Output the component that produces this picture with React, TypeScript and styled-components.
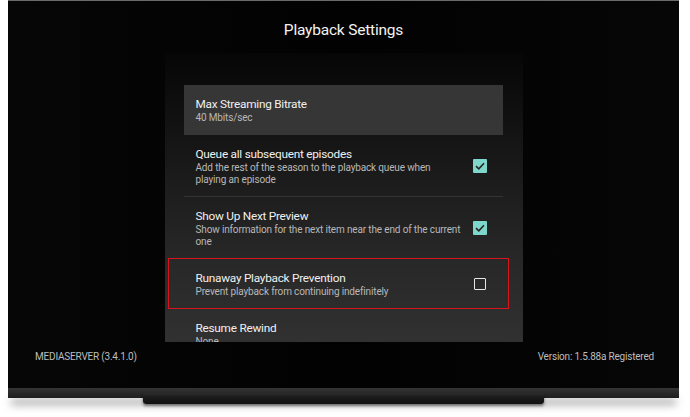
import React from "react";
import styled, { createGlobalStyle } from "styled-components";

const GlobalStyle = createGlobalStyle`
  html, body {
    margin: 0;
    padding: 0;
    background: #ffffff;
  }
  body {
    font-family: Roboto, "Liberation Sans", sans-serif;
  }
`;

type Setting = {
  title: string;
  summary: string;
  checked?: boolean;
  focused?: boolean;
  marked?: boolean;
};

const settings: Setting[] = [
  { title: "Max Streaming Bitrate", summary: "40 Mbits/sec", focused: true },
  {
    title: "Queue all subsequent episodes",
    summary: "Add the rest of the season to the playback queue when playing an episode",
    checked: true,
  },
  {
    title: "Show Up Next Preview",
    summary: "Show information for the next item near the end of the current one",
    checked: true,
  },
  {
    title: "Runaway Playback Prevention",
    summary: "Prevent playback from continuing indefinitely",
    checked: false,
    marked: true,
  },
  { title: "Resume Rewind", summary: "None" },
];

export default function App() {
  return (
    <>
      <GlobalStyle />
      <Stage>
        <Tv>
          <Screen>
            <Header>Playback Settings</Header>
            <Panel>
              <List>
                {settings.map((s) => (
                  <Row key={s.title} $focused={s.focused} $marked={s.marked}>
                    <Texts>
                      <Title>{s.title}</Title>
                      <Summary>{s.summary}</Summary>
                    </Texts>
                    {s.checked !== undefined && (
                      <CheckBox $checked={s.checked}>
                        {s.checked && (
                          <svg width="10" height="8" viewBox="0 0 10 8">
                            <path
                              d="M1 4.2 L3.8 6.8 L9 1.2"
                              fill="none"
                              stroke="#262626"
                              strokeWidth="1.6"
                            />
                          </svg>
                        )}
                      </CheckBox>
                    )}
                  </Row>
                ))}
              </List>
            </Panel>
            <Footer>
              <span>MEDIASERVER (3.4.1.0)</span>
              <span>Version: 1.5.88a Registered</span>
            </Footer>
          </Screen>
          <Bezel />
          <Stand />
        </Tv>
      </Stage>
    </>
  );
}

const Stage = styled.div`
  width: 690px;
  height: 417px;
  overflow: hidden;
  background: #ffffff;
`;

const Tv = styled.div`
  margin-left: 8px;
  width: 671px;
  display: flex;
  flex-direction: column;
`;

const Screen = styled.div`
  height: 387px;
  border-top: 1px solid #6a6a6a;
  background: linear-gradient(90deg, #060606 0%, #020202 50%, #060606 100%);
  display: flex;
  flex-direction: column;
  align-items: center;
`;

const Header = styled.div`
  height: 52px;
  display: flex;
  align-items: center;
  justify-content: center;
  padding-top: 6px;
  box-sizing: border-box;
  color: #f2f2f2;
  font-size: 15.5px;
  letter-spacing: -0.2px;
`;

const Panel = styled.div`
  width: 358px;
  height: 289px;
  overflow: hidden;
  box-sizing: border-box;
  padding: 32px 20px 0 19px;
  background: linear-gradient(
    180deg,
    #060606 0%,
    #0f0f0f 18%,
    #1c1c1c 45%,
    #272727 70%,
    #313131 100%
  );
`;

const List = styled.div`
  display: flex;
  flex-direction: column;
`;

const Row = styled.div<{ $focused?: boolean; $marked?: boolean }>`
  position: relative;
  display: flex;
  align-items: center;
  padding: 11px 16px 10px 12px;
  background: ${(p) => (p.$focused ? "#363636" : "transparent")};
  border-bottom: 1px solid ${(p) => (p.$focused ? "transparent" : "#333333")};

  &::after {
    content: "";
    display: ${(p) => (p.$marked ? "block" : "none")};
    position: absolute;
    left: -16px;
    right: -6px;
    top: -1px;
    bottom: -1px;
    border: 1.5px solid #d8141c;
  }
`;

const Texts = styled.div`
  flex: 1;
  padding-right: 10px;
`;

const Title = styled.div`
  color: #f0f0f0;
  font-size: 11.8px;
  line-height: 16px;
  letter-spacing: -0.25px;
`;

const Summary = styled.div`
  color: #b8b8b8;
  font-size: 10px;
  line-height: 12px;
  letter-spacing: -0.15px;
`;

const CheckBox = styled.div<{ $checked: boolean }>`
  flex: none;
  width: ${(p) => (p.$checked ? "14px" : "12px")};
  height: ${(p) => (p.$checked ? "14px" : "12px")};
  margin: ${(p) => (p.$checked ? "0" : "1px")};
  box-sizing: border-box;
  border-radius: 1px;
  display: flex;
  align-items: center;
  justify-content: center;
  background: ${(p) => (p.$checked ? "#7fd7cb" : "transparent")};
  border: ${(p) => (p.$checked ? "none" : "1.5px solid #e6e6e6")};
`;

const Footer = styled.div`
  align-self: stretch;
  display: flex;
  justify-content: space-between;
  padding: 8px 25px 0 27px;
  color: #bdbdbd;
  font-size: 10px;
  line-height: 14px;
  letter-spacing: -0.2px;
`;

const Bezel = styled.div`
  height: 10px;
  background: linear-gradient(180deg, #353535 0%, #262626 60%, #1e1e1e 100%);
  box-shadow: 0 9px 8px -3px rgba(0, 0, 0, 0.5);
`;

const Stand = styled.div`
  margin: -5px 0 0 135px;
  width: 401px;
  height: 11px;
  border-radius: 0 0 3px 3px;
  background: linear-gradient(180deg, #2c2c2c 0%, #1a1a1a 40%, #111111 100%);
  box-shadow: 0 2px 3px rgba(0, 0, 0, 0.5);
`;
